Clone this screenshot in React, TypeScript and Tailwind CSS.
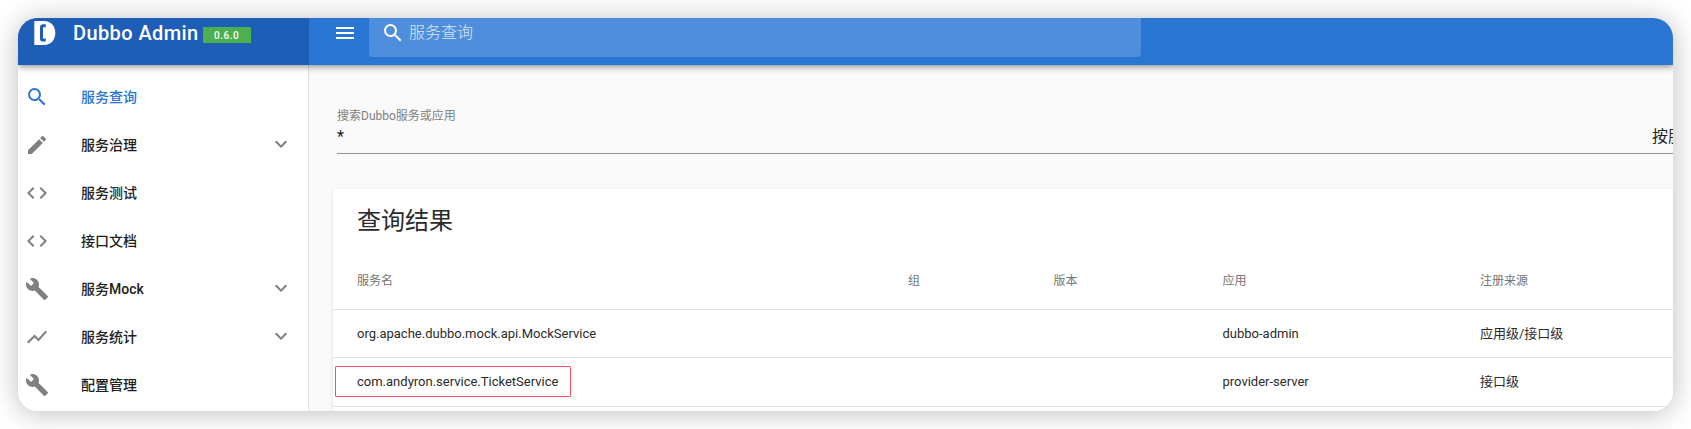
import React from "react";
import { MdBuild, MdCode, MdEdit, MdKeyboardArrowDown, MdMenu, MdSearch, MdShowChart } from "react-icons/md";
import type { IconType } from "react-icons";

type NavItem = { label: string; icon: IconType; active?: boolean; expandable?: boolean };

const navItems: NavItem[] = [
  { label: "服务查询", icon: MdSearch, active: true },
  { label: "服务治理", icon: MdEdit, expandable: true },
  { label: "服务测试", icon: MdCode },
  { label: "接口文档", icon: MdCode },
  { label: "服务Mock", icon: MdBuild, expandable: true },
  { label: "服务统计", icon: MdShowChart, expandable: true },
  { label: "配置管理", icon: MdBuild },
];

const services = [
  { name: "org.apache.dubbo.mock.api.MockService", app: "dubbo-admin", source: "应用级/接口级" },
  { name: "com.andyron.service.TicketService", app: "provider-server", source: "接口级", marked: true },
];

const columns = "grid grid-cols-[551px_145.5px_169px_257.5px_1fr] items-center border-b border-[#e0e0e0] pl-6";

function Logo() {
  return (
    <svg className="h-6 w-[22px] shrink-0" viewBox="0 0 22 24">
      <path d="M0.3 0H10C17 0 21.3 5 21.3 12S17 24 10 24H0.3Z" fill="#fff" />
      <path d="M11.8 4.8H9.2Q7.5 4.8 7.5 6.5V17.4Q7.5 19.1 9.2 19.1H11.8" fill="none" stroke="#1e5eb7" strokeWidth="3" />
    </svg>
  );
}

function Header() {
  return (
    <header className="relative z-10 flex h-[47px] shrink-0 bg-[#2876d2] text-white shadow-[0_2px_4px_-1px_rgba(0,0,0,0.2),0_4px_5px_rgba(0,0,0,0.14),0_1px_10px_rgba(0,0,0,0.12)]">
      <div className="flex w-[291px] shrink-0 items-start bg-[#1e5eb7] pl-4 pt-[3px]">
        <Logo />
        <span className="ml-[17px] text-[20px] font-medium leading-6 tracking-[0.4px]">Dubbo Admin</span>
        <span className="ml-1 mt-[6px] flex h-4 w-12 items-center justify-center bg-[#4caf50] text-[10px] font-medium tracking-[0.5px]">
          0.6.0
        </span>
      </div>
      <MdMenu className="ml-6 mt-[3px] size-6 shrink-0" />
      <div className="ml-3 flex h-[39px] w-[772px] items-start rounded-b-sm bg-[#4f8edc] pl-3 pt-[3px]">
        <MdSearch className="size-6" />
        <span className="ml-1 text-[16px] font-light leading-6 text-[#dfe6f0]">服务查询</span>
      </div>
    </header>
  );
}

function Sidebar() {
  return (
    <nav className="flex w-[291px] shrink-0 flex-col border-r border-[#e0e0e0] bg-white pt-2">
      {navItems.map(({ label, icon: Icon, active, expandable }, i) => (
        <div key={i} className={`flex h-12 shrink-0 items-center pl-[7px] pr-[15px] ${active ? "text-[#2876d2]" : "text-[#212121]"}`}>
          <Icon className={`size-6 ${active ? "" : "text-[#808080]"}`} />
          <span className="ml-8 text-[14px] font-medium">{label}</span>
          {expandable && <MdKeyboardArrowDown className="mb-[2px] ml-auto size-6 text-[#808080]" />}
        </div>
      ))}
    </nav>
  );
}

function SearchField() {
  return (
    <div className="ml-7 h-[89px] pt-[43px]">
      <div className="h-[46px] border-b border-[#949494]">
        <div className="text-[12px] leading-4 text-[#808080]">搜索Dubbo服务或应用</div>
        <div className="flex justify-between">
          <span className="pt-px text-[16px] leading-6">*</span>
          <span className="-mr-[11px] whitespace-nowrap pt-px text-[16px] leading-6">按服</span>
        </div>
      </div>
    </div>
  );
}

function Results() {
  return (
    <section className="ml-6 mt-[35px] w-[1400px] rounded-sm bg-white shadow-[0_3px_1px_-2px_rgba(0,0,0,0.12),0_2px_2px_rgba(0,0,0,0.08),0_1px_5px_rgba(0,0,0,0.08)]">
      <h2 className="flex h-16 items-center pl-6 text-[24px] text-[#2b2b2b]">查询结果</h2>
      <div className={`${columns} h-[57px] text-[12px] text-[#757575]`}>
        <span>服务名</span>
        <span>组</span>
        <span>版本</span>
        <span>应用</span>
        <span>注册来源</span>
      </div>
      {services.map((s) => (
        <div key={s.name} className={`${columns} text-[13px] text-[#2b2b2b] ${s.marked ? "h-[49px]" : "h-12"}`}>
          <span>
            {s.marked ? (
              <span className="-ml-[22px] mb-[2px] flex h-[31px] w-[236px] items-center rounded-[1px] border border-[#f4515e] pl-[21px] pt-px">
                {s.name}
              </span>
            ) : (
              s.name
            )}
          </span>
          <span />
          <span />
          <span>{s.app}</span>
          <span>{s.source}</span>
        </div>
      ))}
      <div className="h-12" />
    </section>
  );
}

export default function App() {
  return (
    <div className="h-[429px] w-[1691px] overflow-hidden bg-white p-[18px] font-['Roboto','Noto_Sans_CJK_SC',sans-serif] text-[#212121]">
      <div className="h-[393px] w-[1655px] rounded-[20px] shadow-[0_2px_28px_rgba(0,0,0,0.27)]">
        <div className="flex h-full flex-col overflow-hidden rounded-[20px] bg-[#fafafa]">
          <Header />
          <div className="flex min-h-0 flex-1">
            <Sidebar />
            <main className="min-w-0 flex-1 overflow-hidden">
              <SearchField />
              <Results />
            </main>
          </div>
        </div>
      </div>
    </div>
  );
}
